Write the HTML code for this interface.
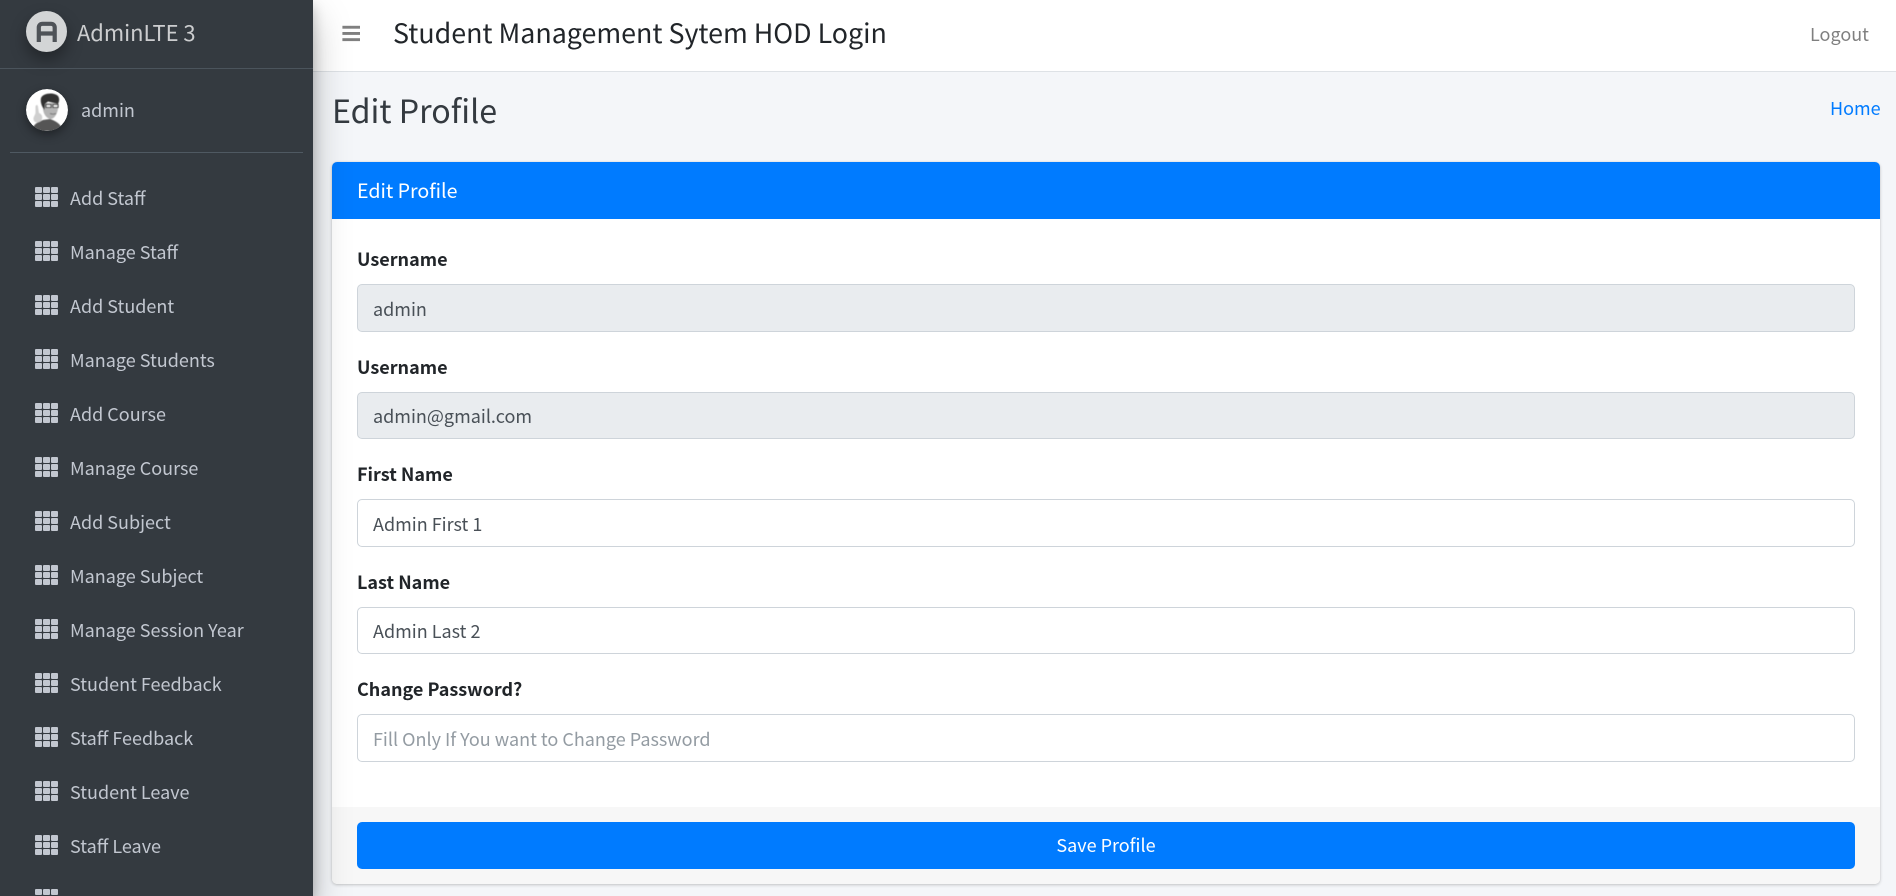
<!DOCTYPE html>
<html lang="en">
<head>
<meta charset="utf-8">
<title>Edit Profile</title>
<style>
html,body{margin:0;padding:0;width:1896px;height:896px;overflow:hidden;background:#f4f6f9}
*{box-sizing:border-box}
body{position:relative;font-family:"Noto Sans CJK SC","Noto Sans CJK JP","Liberation Sans",sans-serif;font-size:18px;color:#212529}
.t{position:absolute;white-space:nowrap;line-height:30px;height:30px}
aside{position:absolute;left:0;top:0;width:313px;height:896px;background:#343a40;overflow:hidden;z-index:5}
.shadow{position:absolute;left:0;top:0;width:313px;height:896px;box-shadow:0 18px 35px rgba(0,0,0,.25),0 6px 12px rgba(0,0,0,.22);z-index:4}
.brandline{position:absolute;left:0;top:68px;width:313px;height:1px;background:#4b545c}
.userline{position:absolute;left:10px;top:152px;width:293px;height:1px;background:#4f5962}
.logo{position:absolute;left:26px;top:11px;width:41px;height:41px;border-radius:50%;background:#d3d5d6;box-shadow:0 8px 16px rgba(0,0,0,.35)}
.avatar{position:absolute;left:26px;top:89px;width:42px;height:42px;border-radius:50%;box-shadow:0 4px 10px rgba(0,0,0,.4)}
.nav{color:#c2c7d0}
.ico{position:absolute;left:35px;width:23px;height:20px}
header{position:absolute;left:313px;top:0;width:1583px;height:72px;background:#fff;border-bottom:1px solid #dee2e6}
.card{position:absolute;left:332px;top:162px;width:1548px;height:722px;background:#fff;border-radius:5px;box-shadow:0 0 1px rgba(0,0,0,.125),0 1px 3px rgba(0,0,0,.2);overflow:hidden}
.chead{position:absolute;left:0;top:0;width:100%;height:57px;background:#007bff}
.cfoot{position:absolute;left:0;top:645px;width:100%;height:77px;background:#f7f7f7}
.inp{position:absolute;left:357px;width:1498px;height:47.5px;border:1px solid #ced4da;border-radius:5px;background:#fff}
.inp.dis{background:#e9ecef}
.val{color:#495057}
.lab{font-weight:700;color:#212529}
.btn{position:absolute;left:357px;top:822px;width:1498px;height:47px;background:#007bff;border-radius:5px;color:#fff;text-align:center;line-height:47px}
</style>
</head>
<body>
<header></header>
<div class="t" style="left:393px;top:12px;font-size:26.8px;height:40px;line-height:40px;color:#212529">Student Management Sytem HOD Login</div>
<svg style="position:absolute;left:342px;top:25px" width="18" height="17" viewBox="0 0 18 17"><rect x="0.4" y="0.8" width="17.6" height="2.9" fill="#808080"/><rect x="0.4" y="7" width="17.6" height="2.9" fill="#808080"/><rect x="0.4" y="13.2" width="17.6" height="2.9" fill="#808080"/></svg>
<div class="t" style="left:1810px;top:19px;color:rgba(0,0,0,.5)">Logout</div>

<h1 class="t" style="margin:0;left:332px;top:88px;font-size:32.2px;font-weight:400;height:44px;line-height:44px;color:#343a40">Edit Profile</h1>
<a class="t" style="left:1830px;top:93px;color:#007bff">Home</a>

<div class="card">
  <div class="chead"></div>
  <div class="cfoot"></div>
</div>
<div class="t" style="left:357px;top:175px;font-size:19.6px;color:#fff">Edit Profile</div>

<div class="t lab" style="left:357px;top:244px">Username</div>
<div class="inp dis" style="top:284px"></div>
<div class="t val" style="left:373px;top:294px">admin</div>

<div class="t lab" style="left:357px;top:352px">Username</div>
<div class="inp dis" style="top:391.5px"></div>
<div class="t val" style="left:373px;top:401px">admin@gmail.com</div>

<div class="t lab" style="left:357px;top:459px">First Name</div>
<div class="inp" style="top:499px"></div>
<div class="t val" style="left:373px;top:509px">Admin First 1</div>

<div class="t lab" style="left:357px;top:567px">Last Name</div>
<div class="inp" style="top:606.5px"></div>
<div class="t val" style="left:373px;top:616px">Admin Last 2</div>

<div class="t lab" style="left:357px;top:674px">Change Password?</div>
<div class="inp" style="top:714px"></div>
<div class="t" style="left:373px;top:724px;color:#939ba2">Fill Only If You want to Change Password</div>

<div class="btn">Save Profile</div>

<div class="shadow"></div>
<aside>
  <div class="logo">
    <svg width="41" height="41" viewBox="0 0 41 41" style="display:block"><path d="M12.8 31V16.5C12.8 14.3 14.3 12.8 16.5 12.8H25C27.2 12.8 28.7 14.3 28.7 16.5V31M12.8 22.5H28.7" fill="none" stroke="#4f5358" stroke-width="4.2"/></svg>
  </div>
  <div class="t" style="left:77px;top:18px;font-size:21.9px;height:30px;line-height:30px;color:rgba(255,255,255,.75)">AdminLTE 3</div>
  <div class="brandline"></div>

  <svg class="avatar" viewBox="0 0 42 42">
    <defs><clipPath id="c"><circle cx="21" cy="21" r="21"/></clipPath><filter id="b" x="-10%" y="-10%" width="120%" height="120%"><feGaussianBlur stdDeviation="0.5"/></filter></defs>
    <g clip-path="url(#c)">
      <rect width="42" height="42" fill="#fff"/>
      <g filter="url(#b)">
      <path d="M6 42C7 35 12 33 17 31L24 30C30 32 35 35 37 42Z" fill="#555"/>
      <path d="M17 14H32C33 21 30 29 25 30C21 30 17 25 17 19Z" fill="#b4b4b4"/>
      <path d="M15 9C17 4 28 3 32 7C34 10 33 13 32 15L22 12.5L19 15L18.5 21C16 18 14 13 15 9Z" fill="#333"/>
      <path d="M20 15.5h5v3h-5zM27 15.5h5v3h-5z" fill="#eee" stroke="#222" stroke-width="1.1"/>
      <path d="M24 24.5c2 .8 4 .8 6 0" stroke="#777" stroke-width="1" fill="none"/>
      <path d="M9.5 17.5C10 15.5 12 15.5 12 18L13 24C16 25 17.5 29 15 32C11 35 7 33 7.5 29C8 27 9 26 9.5 24Z" fill="#cfcfcf"/>
      </g>
    </g>
  </svg>
  <div class="t nav" style="left:81px;top:95px">admin</div>
  <div class="userline"></div>

  <svg width="0" height="0" style="position:absolute"><defs>
    <g id="th" fill="#c2c7d0">
      <rect x="0" y="0" width="7" height="6" rx="1"/><rect x="8" y="0" width="7" height="6" rx="1"/><rect x="16" y="0" width="7" height="6" rx="1"/>
      <rect x="0" y="7" width="7" height="6" rx="1"/><rect x="8" y="7" width="7" height="6" rx="1"/><rect x="16" y="7" width="7" height="6" rx="1"/>
      <rect x="0" y="14" width="7" height="6" rx="1"/><rect x="8" y="14" width="7" height="6" rx="1"/><rect x="16" y="14" width="7" height="6" rx="1"/>
    </g>
  </defs></svg>

  <svg class="ico" style="top:187px"><use href="#th"/></svg><div class="t nav" style="left:70px;top:183px">Add Staff</div>
  <svg class="ico" style="top:241px"><use href="#th"/></svg><div class="t nav" style="left:70px;top:237px">Manage Staff</div>
  <svg class="ico" style="top:295px"><use href="#th"/></svg><div class="t nav" style="left:70px;top:291px">Add Student</div>
  <svg class="ico" style="top:349px"><use href="#th"/></svg><div class="t nav" style="left:70px;top:345px">Manage Students</div>
  <svg class="ico" style="top:403px"><use href="#th"/></svg><div class="t nav" style="left:70px;top:399px">Add Course</div>
  <svg class="ico" style="top:457px"><use href="#th"/></svg><div class="t nav" style="left:70px;top:453px">Manage Course</div>
  <svg class="ico" style="top:511px"><use href="#th"/></svg><div class="t nav" style="left:70px;top:507px">Add Subject</div>
  <svg class="ico" style="top:565px"><use href="#th"/></svg><div class="t nav" style="left:70px;top:561px">Manage Subject</div>
  <svg class="ico" style="top:619px"><use href="#th"/></svg><div class="t nav" style="left:70px;top:615px">Manage Session Year</div>
  <svg class="ico" style="top:673px"><use href="#th"/></svg><div class="t nav" style="left:70px;top:669px">Student Feedback</div>
  <svg class="ico" style="top:727px"><use href="#th"/></svg><div class="t nav" style="left:70px;top:723px">Staff Feedback</div>
  <svg class="ico" style="top:781px"><use href="#th"/></svg><div class="t nav" style="left:70px;top:777px">Student Leave</div>
  <svg class="ico" style="top:835px"><use href="#th"/></svg><div class="t nav" style="left:70px;top:831px">Staff Leave</div>
  <svg class="ico" style="top:889px"><use href="#th"/></svg>
</aside>
</body>
</html>
